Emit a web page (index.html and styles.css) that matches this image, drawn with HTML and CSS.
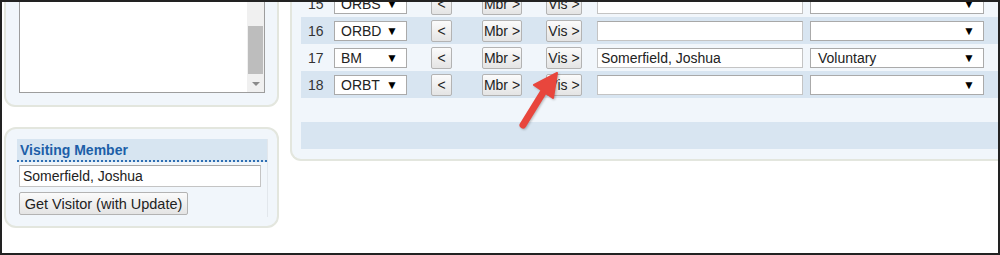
FILE: index.html
```html
<!DOCTYPE html>
<html lang="en">
<head>
    <meta charset="UTF-8">
    <title>Seat Assignments</title>
    <link rel="stylesheet" href="styles.css">
</head>
<body>
    <div class="frame">
        <div class="layout">
            <aside class="side">
                <section class="panel list-panel">
                    <div class="listbox">
                        <div class="list-items"></div>
                        <div class="scroll">
                            <div class="thumb"></div>
                            <div class="scroll-down">
                                <svg width="8" height="4" viewBox="0 0 8 4"><polygon points="0,0 8,0 4,4" fill="#8a8a8a"/></svg>
                            </div>
                        </div>
                    </div>
                </section>

                <section class="panel visit-panel">
                    <div class="visit-inner">
                        <h3 class="visit-title">Visiting Member</h3>
                        <input class="field visit-field" type="text" value="Somerfield, Joshua">
                        <button class="btn visit-btn">Get Visitor (with Update)</button>
                    </div>
                </section>
            </aside>

            <section class="panel seats">
                <div class="row">
                    <span class="num">15</span>
                    <div class="pick pos"><span>ORBS</span><span class="caret">&#9660;</span></div>
                    <button class="btn btn-back">&lt;</button>
                    <button class="btn btn-mbr">Mbr &gt;</button>
                    <button class="btn btn-vis">Vis &gt;</button>
                    <input class="field name" type="text" value="">
                    <div class="pick reason"><span></span><span class="caret">&#9660;</span></div>
                </div>
                <div class="row alt">
                    <span class="num">16</span>
                    <div class="pick pos"><span>ORBD</span><span class="caret">&#9660;</span></div>
                    <button class="btn btn-back">&lt;</button>
                    <button class="btn btn-mbr">Mbr &gt;</button>
                    <button class="btn btn-vis">Vis &gt;</button>
                    <input class="field name" type="text" value="">
                    <div class="pick reason"><span></span><span class="caret">&#9660;</span></div>
                </div>
                <div class="row">
                    <span class="num">17</span>
                    <div class="pick pos"><span>BM</span><span class="caret">&#9660;</span></div>
                    <button class="btn btn-back">&lt;</button>
                    <button class="btn btn-mbr">Mbr &gt;</button>
                    <button class="btn btn-vis">Vis &gt;</button>
                    <input class="field name" type="text" value="Somerfield, Joshua">
                    <div class="pick reason"><span>Voluntary</span><span class="caret">&#9660;</span></div>
                </div>
                <div class="row alt">
                    <span class="num">18</span>
                    <div class="pick pos"><span>ORBT</span><span class="caret">&#9660;</span></div>
                    <button class="btn btn-back">&lt;</button>
                    <button class="btn btn-mbr">Mbr &gt;</button>
                    <button class="btn btn-vis">Vis &gt;</button>
                    <input class="field name" type="text" value="">
                    <div class="pick reason"><span></span><span class="caret">&#9660;</span></div>
                </div>
                <div class="row blank short"></div>
                <div class="row blank alt"></div>
            </section>
        </div>

        <!-- callout arrow pointing at the Vis > button -->
        <svg class="callout" width="52" height="70" viewBox="0 0 52 70">
            <line x1="29" y1="26" x2="8" y2="60" stroke="#e8463d" stroke-width="7" stroke-linecap="round"/>
            <polygon points="42,8 19,20 38,33" fill="#e8463d" stroke="#e8463d" stroke-width="2" stroke-linejoin="round"/>
        </svg>
    </div>
</body>
</html>
```

FILE: styles.css
```css
* {
    box-sizing: border-box;
}

body {
    margin: 0;
    font-family: 'Liberation Sans', Arial, sans-serif;
    font-size: 14px;
    color: #222;
    background: #fff;
}

.frame {
    position: relative;
    width: 1000px;
    height: 255px;
    border: 2px solid #222;
    background: #fff;
    overflow: hidden;
}

.layout {
    display: flex;
    align-items: flex-start;
    margin-top: -42px;
    padding-left: 2px;
}

.side {
    display: flex;
    flex-direction: column;
    gap: 20px;
    width: 275px;
    flex-shrink: 0;
}

.panel {
    background-color: #f1f6fb;
    border: 2px solid #e3e6de;
}

/* top-left list box */
.list-panel {
    display: flex;
    height: 147px;
    padding: 10px 12px 12px 13px;
    border-radius: 0 0 11px 11px;
}

.listbox {
    flex: 1;
    display: flex;
    background: #fff;
    border: 1px solid #9d9d9d;
    border-top-color: #8a8a8a;
}

.list-items {
    flex: 1;
}

.scroll {
    width: 17px;
    display: flex;
    flex-direction: column;
    justify-content: flex-end;
    background: #f0f0f0;
}

.thumb {
    height: 48px;
    margin: 0 1px 1px 1px;
    background: #bdbdbd;
}

.scroll-down {
    height: 17px;
    display: flex;
    justify-content: center;
    align-items: center;
}

/* visiting member box */
.visit-panel {
    height: 101px;
    padding: 10px 9px 9px 11px;
    border-radius: 12px;
}

.visit-inner {
    height: 100%;
    border-right: 1px solid #e2e7ec;
}

.visit-title {
    margin: 0;
    height: 23px;
    padding-left: 3px;
    line-height: 22px;
    font-size: 14px;
    font-weight: bold;
    color: #1c5fa8;
    background-color: #d7e5f1;
    border-bottom: 2px dotted #2f6fb4;
}

.field {
    display: block;
    height: 22px;
    margin: 0;
    padding: 0 3px;
    font-family: inherit;
    font-size: 14px;
    color: #222;
    background: #fff;
    border: 1px solid #c4c4c4;
    border-top-color: #a8a8a8;
    border-radius: 0;
    outline: none;
}

.visit-field {
    width: 242px;
    margin: 3px 0 0 2px;
}

.btn {
    height: 22px;
    margin: 0;
    padding: 0;
    font-family: inherit;
    font-size: 14px;
    color: #222;
    background: linear-gradient(#fbfbfb, #e4e4e4);
    border: 1px solid #b3b3b3;
    border-radius: 2px;
}

.visit-btn {
    display: block;
    width: 169px;
    height: 23px;
    margin: 5px 0 0 2px;
    font-size: 14.5px;
}

/* seat table */
.seats {
    width: 730px;
    margin-left: 11px;
    padding: 28px 0 10px 9px;
    border-right: none;
    border-radius: 0 0 0 11px;
}

.row {
    display: grid;
    grid-template-columns: 33px 97px 51px 64px 51px 213px 174px;
    align-items: center;
    height: 27px;
}

.row.alt {
    background-color: #d8e5f1;
}

.row.short {
    height: 24px;
}

.num {
    padding-left: 7px;
    color: #333;
}

.pick {
    display: flex;
    justify-content: space-between;
    align-items: center;
    height: 20px;
    padding: 0 8px 0 6px;
    background: #fff;
    border: 1px solid #aaa;
    color: #222;
}

.pos {
    width: 73px;
}

.reason {
    width: 174px;
    padding-left: 7px;
}

.caret {
    font-size: 12px;
    line-height: 1;
    color: #000;
}

.btn-back {
    width: 21px;
}

.btn-mbr {
    width: 40px;
}

.btn-vis {
    width: 36px;
}

.name {
    width: 206px;
    height: 20px;
}

.callout {
    position: absolute;
    left: 513px;
    top: 63px;
    filter: drop-shadow(1px 1px 1px rgba(0, 0, 0, 0.25));
}
```
